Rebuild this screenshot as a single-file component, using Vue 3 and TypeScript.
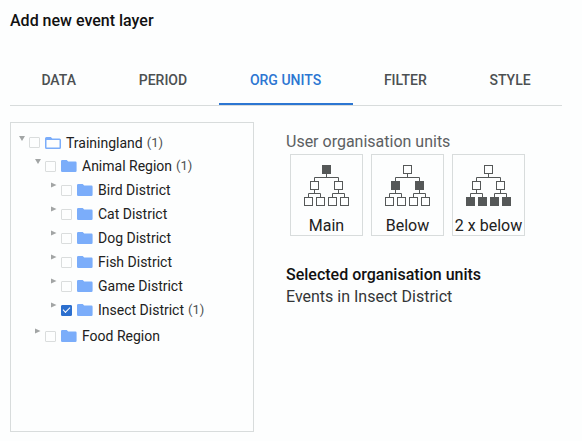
<script setup lang="ts">
import { ref } from 'vue'

interface OrgUnit {
  id: string
  name: string
  depth: number
  open: boolean
  count?: number
  checked: boolean
  root?: boolean
}

interface Level {
  label: string
  filled: number
}

const tabs = ['Data', 'Period', 'Org units', 'Filter', 'Style']
const activeTab = ref('Org units')

const units = ref<OrgUnit[]>([
  { id: 'trainingland', name: 'Trainingland', depth: 0, open: true, count: 1, checked: false, root: true },
  { id: 'animal', name: 'Animal Region', depth: 1, open: true, count: 1, checked: false },
  { id: 'bird', name: 'Bird District', depth: 2, open: false, checked: false },
  { id: 'cat', name: 'Cat District', depth: 2, open: false, checked: false },
  { id: 'dog', name: 'Dog District', depth: 2, open: false, checked: false },
  { id: 'fish', name: 'Fish District', depth: 2, open: false, checked: false },
  { id: 'game', name: 'Game District', depth: 2, open: false, checked: false },
  { id: 'insect', name: 'Insect District', depth: 2, open: false, count: 1, checked: true },
  { id: 'food', name: 'Food Region', depth: 1, open: false, checked: false },
])

const levels: Level[] = [
  { label: 'Main', filled: 0 },
  { label: 'Below', filled: 1 },
  { label: '2 x below', filled: 2 },
]

const nodes = [
  { x: 18, y: 0, level: 0 },
  { x: 6, y: 16, level: 1 },
  { x: 30, y: 16, level: 1 },
  { x: 0, y: 32, level: 2 },
  { x: 12, y: 32, level: 2 },
  { x: 24, y: 32, level: 2 },
  { x: 36, y: 32, level: 2 },
]
</script>

<template>
  <main class="dialog">
    <h1 class="title">Add new event layer</h1>

    <nav class="tabs" role="tablist">
      <button
        v-for="tab in tabs"
        :key="tab"
        type="button"
        role="tab"
        class="tab"
        :class="{ active: tab === activeTab }"
        :aria-selected="tab === activeTab"
        @click="activeTab = tab"
      >{{ tab }}</button>
    </nav>

    <div class="content">
      <ul class="tree">
        <li v-for="unit in units" :key="unit.id" class="unit" :class="['depth-' + unit.depth, { last: unit.id === 'food' }]">
          <button type="button" class="toggle" :class="{ open: unit.open }" :aria-label="'Toggle ' + unit.name" :aria-expanded="unit.open">
            <svg v-if="unit.open" width="6" height="5" viewBox="0 0 6 5"><path d="M0 0h6L3 5z" /></svg>
            <svg v-else width="6" height="6" viewBox="0 0 6 6"><path d="M0 0.5v5L5.5 3z" /></svg>
          </button>
          <input :id="unit.id" v-model="unit.checked" type="checkbox" class="check" />
          <label :for="unit.id" class="unit-label">
            <svg class="folder" width="16" height="12" viewBox="0 0 16 12">
              <path v-if="unit.root" class="outline" d="M.75 1.5q0-.75.75-.75h4l1.5 1.5h7.5q.75 0 .75.75v7.5q0 .75-.75.75h-13q-.75 0-.75-.75z" />
              <path v-if="unit.root" class="solid" d="M1 1h5l1.5 2H1z" />
              <path v-else class="solid" d="M0 1.3Q0 0 1.3 0h4.4L7.2 1.5h7.3Q15.6 1.5 15.6 2.8v8Q15.6 12 14.4 12H1.3Q0 12 0 10.7z" />
            </svg>
            <span class="name">{{ unit.name }}</span>
            <span v-if="unit.count" class="count">({{ unit.count }})</span>
          </label>
        </li>
      </ul>

      <section class="side">
        <h2 class="caption">User organisation units</h2>
        <div class="levels">
          <button v-for="level in levels" :key="level.label" type="button" class="level">
            <svg width="45" height="41" viewBox="0 0 45 41" aria-hidden="true">
              <path class="line" d="M22.5 9v3.5M10.5 16v-3.5h24V16M10.5 25v3.5M4.5 32v-3.5h12V32M34.5 25v3.5M28.5 32v-3.5h12V32" />
              <rect
                v-for="(node, i) in nodes"
                :key="i"
                :x="node.x + 0.5"
                :y="node.y + 0.5"
                width="8"
                height="8"
                class="node"
                :class="{ filled: node.level === level.filled }"
              />
            </svg>
            <span>{{ level.label }}</span>
          </button>
        </div>
        <h2 class="selected-title">Selected organisation units</h2>
        <p class="selected">Events in Insect District</p>
      </section>
    </div>
  </main>
</template>

<style>
body {
  background: #fdfefe;
}
</style>

<style scoped>
.dialog {
  padding: 10px 20px 8px 10px;
  font-family: Roboto, "Liberation Sans", sans-serif;
  color: #212121;
}

button {
  font-family: inherit;
  background: none;
  border: 0;
  padding: 0;
  cursor: pointer;
}

.title {
  margin: 0;
  font-size: 16px;
  line-height: 22px;
  font-weight: 500;
  color: #111;
}

.tabs {
  display: flex;
  margin-top: 23px;
  border-bottom: 1px solid #d8dcdc;
}

.tab {
  flex: 1 0 auto;
  height: 50px;
  padding: 2px 31px 0;
  border-bottom: 2px solid transparent;
  font-size: 14px;
  font-weight: 500;
  text-transform: uppercase;
  color: #4c5052;
}

.tab.active {
  color: #2c76d2;
  border-bottom-color: #2c76d2;
}

.content {
  display: flex;
  align-items: stretch;
  gap: 32px;
  margin-top: 16px;
}

.tree {
  box-sizing: border-box;
  flex: 0 0 244px;
  min-height: 310px;
  margin: 0;
  padding: 8px;
  border: 1px solid #d8dcdc;
  list-style: none;
}

.unit {
  display: flex;
  align-items: center;
  height: 24px;
}

.unit.last {
  padding-top: 2px;
}

.depth-0 {
  height: 23px;
}

.depth-1 {
  padding-left: 16px;
}

.depth-2 {
  padding-left: 32px;
}

.toggle {
  display: flex;
  align-self: flex-start;
  width: 10px;
  padding-top: 4px;
}

.toggle.open {
  padding-top: 5px;
}

.toggle svg {
  fill: #a2a5a5;
}

.check {
  appearance: none;
  display: grid;
  place-items: center;
  box-sizing: border-box;
  width: 11px;
  height: 11px;
  margin: 0;
  border: 1px solid #dadddd;
  border-radius: 1px;
}

.check:checked {
  background: #2c6fce;
  border-color: #2c6fce;
}

.check:checked::before {
  content: "";
  width: 6px;
  height: 3px;
  border: solid #fff;
  border-width: 0 0 1px 1px;
  transform: translateY(-1px) rotate(-45deg);
}

.unit-label {
  display: flex;
  align-items: center;
  margin-left: 5px;
  font-size: 14px;
  line-height: 24px;
}

.folder .solid {
  fill: #7badfa;
}

.folder .outline {
  fill: none;
  stroke: #7badfa;
  stroke-width: 1.5;
}

.name {
  margin-left: 5px;
}

.count {
  margin-left: 4px;
  font-size: 13px;
  color: #4c5052;
}

.side {
  flex: 1;
  min-width: 0;
  padding-top: 9px;
}

.caption,
.selected-title {
  margin: 0;
  font-size: 16px;
  line-height: 22px;
}

.caption {
  font-weight: 400;
  color: #5c6062;
}

.levels {
  display: flex;
  gap: 8px;
  margin: 1px 0 0 4px;
}

.level {
  display: flex;
  flex-direction: column;
  align-items: center;
  box-sizing: border-box;
  width: 73px;
  padding: 10px 0 0;
  border: 1px solid #d8dcdc;
  font-size: 16px;
  line-height: 18px;
  white-space: nowrap;
  color: #212121;
}

.level span {
  margin-top: 11px;
}

.line {
  fill: none;
  stroke: #555858;
}

.node {
  fill: #fdfefe;
  stroke: #555858;
}

.node.filled {
  fill: #555858;
}

.selected-title {
  margin-top: 28px;
  font-weight: 500;
  color: #111;
}

.selected {
  margin: 0;
  font-size: 16px;
  line-height: 22px;
  color: #333637;
}
</style>
